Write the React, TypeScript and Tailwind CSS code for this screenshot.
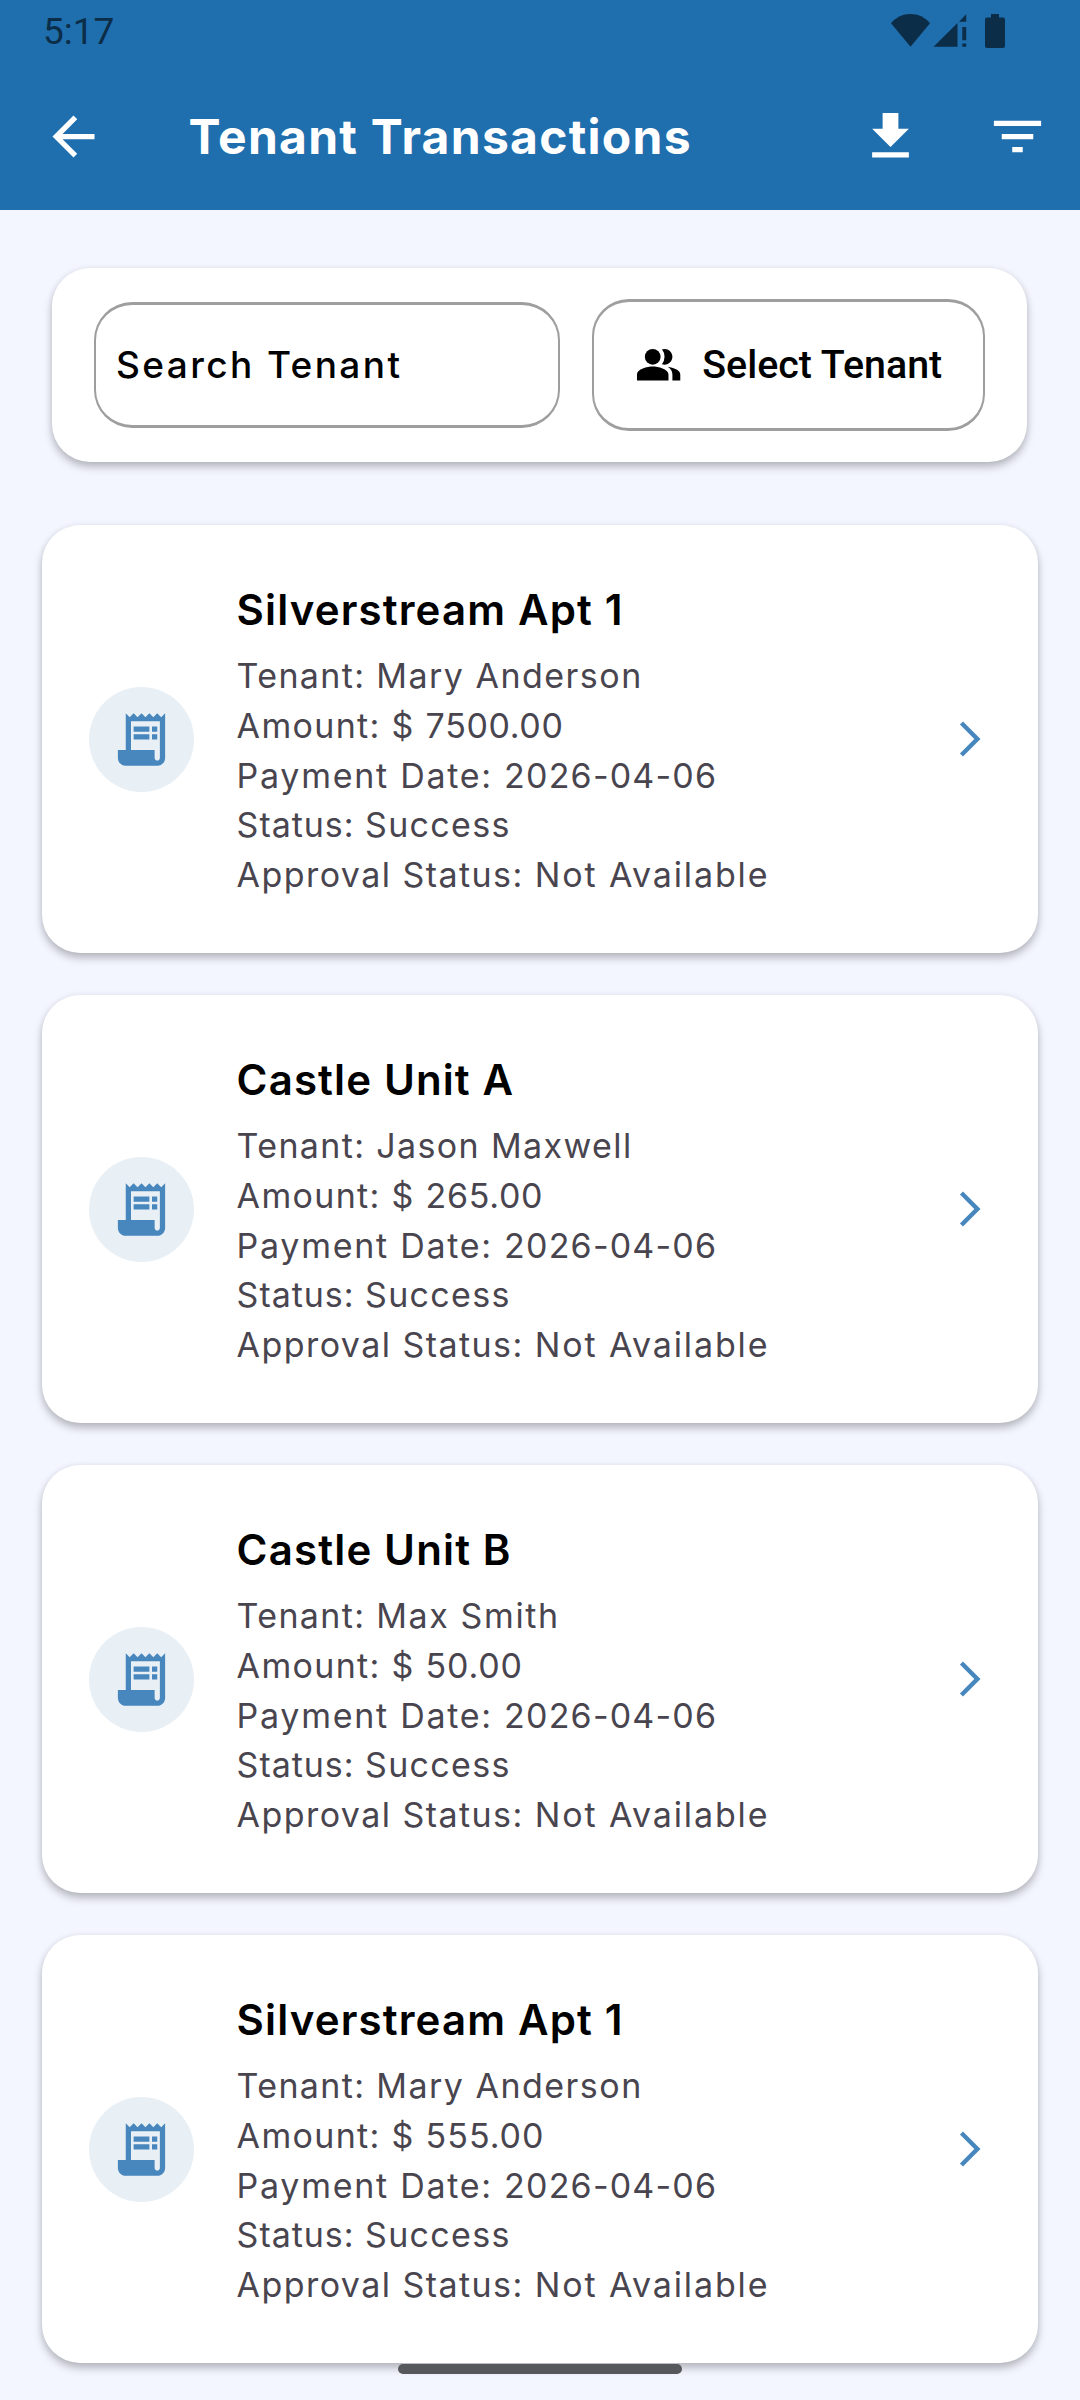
import {
  MdArrowBack,
  MdArrowForwardIos,
  MdFileDownload,
  MdFilterList,
  MdPeopleAlt,
  MdReceiptLong,
} from "react-icons/md";

type Field = { label: string; value: string; labelClass: string; valueClass: string };
type Transaction = { title: string; titleClass: string; fields: Field[] };

const tenant = (value: string, valueClass: string): Field => ({
  label: "Tenant: ",
  value,
  labelClass: "tracking-[1.35px]",
  valueClass,
});

const amount = (value: string, valueClass: string): Field => ({
  label: "Amount: $ ",
  value,
  labelClass: "tracking-[1.33px]",
  valueClass,
});

const common: Field[] = [
  { label: "Payment Date: ", value: "2026-04-06", labelClass: "tracking-[1.72px]", valueClass: "tracking-[1.2px]" },
  { label: "Status: ", value: "Success", labelClass: "tracking-[0.97px]", valueClass: "tracking-[1.3px]" },
  { label: "Approval Status: ", value: "Not Available", labelClass: "tracking-[1.44px]", valueClass: "tracking-[1.88px]" },
];

const transactions: Transaction[] = [
  {
    title: "Silverstream Apt 1",
    titleClass: "tracking-[1.15px]",
    fields: [tenant("Mary Anderson", "tracking-[1.48px]"), amount("7500.00", "tracking-[0.65px]"), ...common],
  },
  {
    title: "Castle Unit A",
    titleClass: "tracking-[1.12px]",
    fields: [tenant("Jason Maxwell", "tracking-[1.38px]"), amount("265.00", "tracking-[0.7px]"), ...common],
  },
  {
    title: "Castle Unit B",
    titleClass: "tracking-[1.15px]",
    fields: [tenant("Max Smith", "tracking-[1.6px]"), amount("50.00", "tracking-[0.8px]"), ...common],
  },
  {
    title: "Silverstream Apt 1",
    titleClass: "tracking-[1.15px]",
    fields: [tenant("Mary Anderson", "tracking-[1.48px]"), amount("555.00", "tracking-[1px]"), ...common],
  },
];

function StatusBar() {
  return (
    <div className="flex h-[63px] items-start justify-between pl-[43px] pr-[75px] text-[#0c2d47]">
      <span className="pt-[10px] font-[Roboto,sans-serif] text-[37px] leading-[43px]">5:17</span>
      <svg className="mt-[14px] h-[34px] w-[114px]" viewBox="0 0 114 34" fill="currentColor" aria-hidden="true">
        <path d="M0 9.2C5 3.2 12 0 19.5 0S34 3.2 39 9.2L19.5 32.7z" />
        <path d="M42.5 32.7L66.5 9v23.7zM68 7.8L75.2 0.3v7.5zM71.3 13h3.9v13.2h-3.9zM71.3 29.4h3.9v3.4h-3.9z" />
        <path d="M100 0h8v3.4h4a2 2 0 0 1 2 2V32a2 2 0 0 1-2 2H96a2 2 0 0 1-2-2V5.4a2 2 0 0 1 2-2h4z" />
      </svg>
    </div>
  );
}

function AppBar() {
  return (
    <div className="flex h-[147px] items-center pl-[42px] pr-[31px] text-white">
      <MdArrowBack className="size-[63px] shrink-0" />
      <h1 className="ml-[83.5px] whitespace-nowrap text-[48px] font-bold leading-[63px] tracking-[1.27px]">
        Tenant Transactions
      </h1>
      <MdFileDownload className="ml-auto size-[63px] shrink-0" />
      <MdFilterList className="ml-16 size-[63px] shrink-0" />
    </div>
  );
}

function SearchPanel() {
  return (
    <section className="ml-[52px] mr-[53px] mt-[58px] flex h-[194px] items-center rounded-[38px] bg-white px-[42px] shadow-[0_5px_9px_rgba(0,0,0,0.25),0_0_6px_rgba(0,0,0,0.05)]">
      <div className="flex h-[126px] w-[466px] items-center rounded-[38px] border-x-2 border-y-3 border-[#9e9e9e] pl-[20px] text-[37px] font-medium tracking-[2.4px] text-black">
        Search Tenant
      </div>
      <button className="ml-8 flex h-[132px] w-[393px] items-center rounded-[37px] border-x-2 border-y-3 border-[#9e9e9e] pl-[41px] font-[Roboto,sans-serif] text-[39.375px] font-medium text-black">
        <MdPeopleAlt className="size-[47.25px] shrink-0" />
        <span className="ml-[20px] whitespace-nowrap">Select Tenant</span>
      </button>
    </section>
  );
}

function TransactionCard({ title, titleClass, fields }: Transaction) {
  return (
    <article className="flex h-[428px] items-center rounded-[38px] bg-white pl-[47px] pr-[47px] shadow-[0_5px_9px_rgba(0,0,0,0.25),0_0_6px_rgba(0,0,0,0.05)]">
      <div className="flex size-[105px] shrink-0 items-center justify-center rounded-full bg-[#e8eff5] text-[#4787bd]">
        <MdReceiptLong className="size-[63px]" />
      </div>
      <div className="ml-[42.6px] mt-[53px] flex-1 self-start">
        <h2 className={"text-[42px] font-semibold leading-[63px] text-black " + titleClass}>{title}</h2>
        <div className="mt-[10px] text-[34px] leading-[49.75px] text-[#49454f]">
          {fields.map((f) => (
            <p key={f.label} className="whitespace-pre">
              <span className={f.labelClass}>{f.label}</span>
              <span className={f.valueClass}>{f.value}</span>
            </p>
          ))}
        </div>
      </div>
      <MdArrowForwardIos className="size-[42px] shrink-0 text-[#4787bd]" />
    </article>
  );
}

export default function App() {
  return (
    <main className="relative h-[2400px] w-[1080px] overflow-hidden bg-[#f3f5ff] font-[Inter,sans-serif]">
      <header className="h-[210px] bg-[#1f6eae]">
        <StatusBar />
        <AppBar />
      </header>
      <SearchPanel />
      <div className="mt-[63px] flex flex-col gap-[42px] px-[42px]">
        {transactions.map((t, i) => (
          <TransactionCard key={i} {...t} />
        ))}
      </div>
      <div className="absolute bottom-[26px] left-[398px] h-[10px] w-[284px] rounded-full bg-[#57585b]" />
    </main>
  );
}
